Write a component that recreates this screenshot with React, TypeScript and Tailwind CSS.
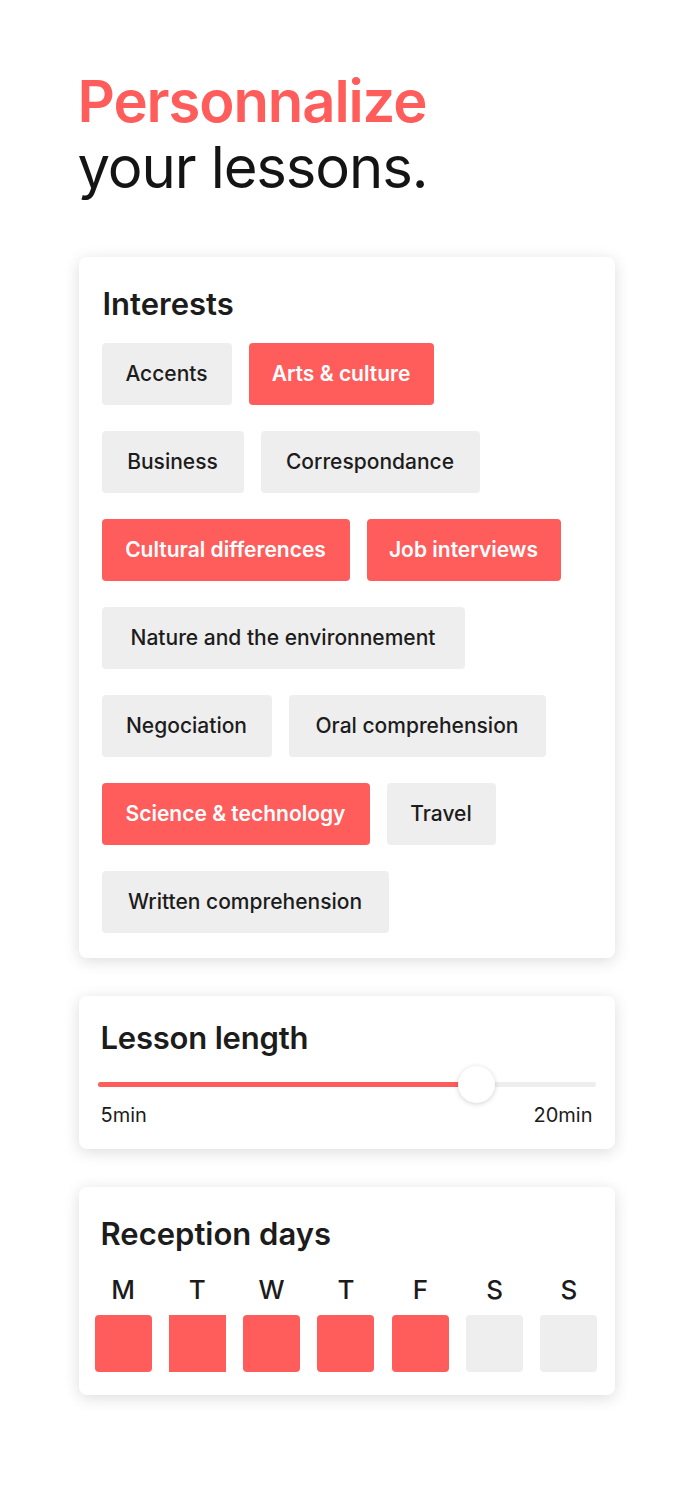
import React from "react";

const chips: { t: string; w: number; on: boolean }[] = [
  { t: "Accents", w: 130, on: false },
  { t: "Arts & culture", w: 185, on: true },
  { t: "Business", w: 142, on: false },
  { t: "Correspondance", w: 219, on: false },
  { t: "Cultural differences", w: 248, on: true },
  { t: "Job interviews", w: 194, on: true },
  { t: "Nature and the environnement", w: 363, on: false },
  { t: "Negociation", w: 170, on: false },
  { t: "Oral comprehension", w: 257, on: false },
  { t: "Science & technology", w: 268, on: true },
  { t: "Travel", w: 109, on: false },
  { t: "Written comprehension", w: 287, on: false },
];

const days = [
  { d: "M", on: true },
  { d: "T", on: true },
  { d: "W", on: true },
  { d: "T", on: true },
  { d: "F", on: true },
  { d: "S", on: false },
  { d: "S", on: false },
];

export default function App() {
  return (
    <div
      className="min-h-[1500px] bg-white text-[#1c1c1c]"
      style={{ fontFamily: "Inter, 'Noto Sans', sans-serif" }}
    >
      <div className="mx-auto w-[536px] pt-[68px] pb-[100px]">
        <h1 className="text-[58px] leading-[66px] -ml-px tracking-[-1.1px]">
          <span className="block font-semibold text-[#ff5c5c]">Personnalize</span>
          <span className="block font-normal text-[#141414]">your lessons.</span>
        </h1>

        <div className="mt-[57px] rounded-lg bg-white shadow-[0_3px_16px_rgba(0,0,0,0.14)] pl-[23px] pr-6 pt-[27px] pb-[25px]">
          <h2 className="text-[31px] leading-[40px] font-semibold pl-px">Interests</h2>
          <div className="mt-[19px] flex flex-wrap gap-x-[17px] gap-y-[26px]">
            {chips.map((c) => (
              <div
                key={c.t}
                className={
                  c.on
                    ? "h-[62px] flex items-center justify-center rounded-[4px] bg-[#ff5c5c] text-white text-[21px] font-semibold whitespace-nowrap"
                    : "h-[62px] flex items-center justify-center rounded-[4px] bg-[#eeeeee] text-[#1c1c1c] text-[21px] font-medium whitespace-nowrap"
                }
                style={{ width: c.w }}
              >
                {c.t}
              </div>
            ))}
          </div>
        </div>

        <div className="mt-[38px] rounded-lg bg-white shadow-[0_3px_16px_rgba(0,0,0,0.14)] px-[19px] pt-[22px] pb-[22px]">
          <h2 className="text-[31px] leading-[40px] font-semibold pl-[3px] tracking-[-0.2px]">Lesson length</h2>
          <div className="relative mt-[24px] h-[5px] rounded-full bg-[#eeeeee]">
            <div className="absolute left-0 top-0 h-[5px] w-[378px] rounded-full bg-[#ff5c5c]" />
            <div className="absolute left-[360px] top-[-16px] h-[37px] w-[37px] rounded-full bg-white shadow-[0_1px_5px_rgba(0,0,0,0.18)]" />
          </div>
          <div className="mt-4 flex justify-between px-[3px] text-[20px] leading-[24px] font-normal">
            <span>5min</span>
            <span>20min</span>
          </div>
        </div>

        <div className="mt-[38px] rounded-lg bg-white shadow-[0_3px_16px_rgba(0,0,0,0.14)] pl-4 pr-[17px] pt-[27px] pb-[23px]">
          <h2 className="text-[31px] leading-[40px] font-semibold pl-[6px]">Reception days</h2>
          <div className="mt-5 flex justify-between">
            {days.map((d, i) => (
              <div key={i} className="flex w-[57px] flex-col items-center">
                <span className="text-[26px] leading-[32px] font-medium">{d.d}</span>
                <div
                  className={
                    (d.on ? "bg-[#ff5c5c] " : "bg-[#eeeeee] ") +
                    (i === 1 ? "rounded-none " : "rounded-[4px] ") +
                    "mt-[9px] h-[57px] w-[57px]"
                  }
                />
              </div>
            ))}
          </div>
        </div>
      </div>
    </div>
  );
}
